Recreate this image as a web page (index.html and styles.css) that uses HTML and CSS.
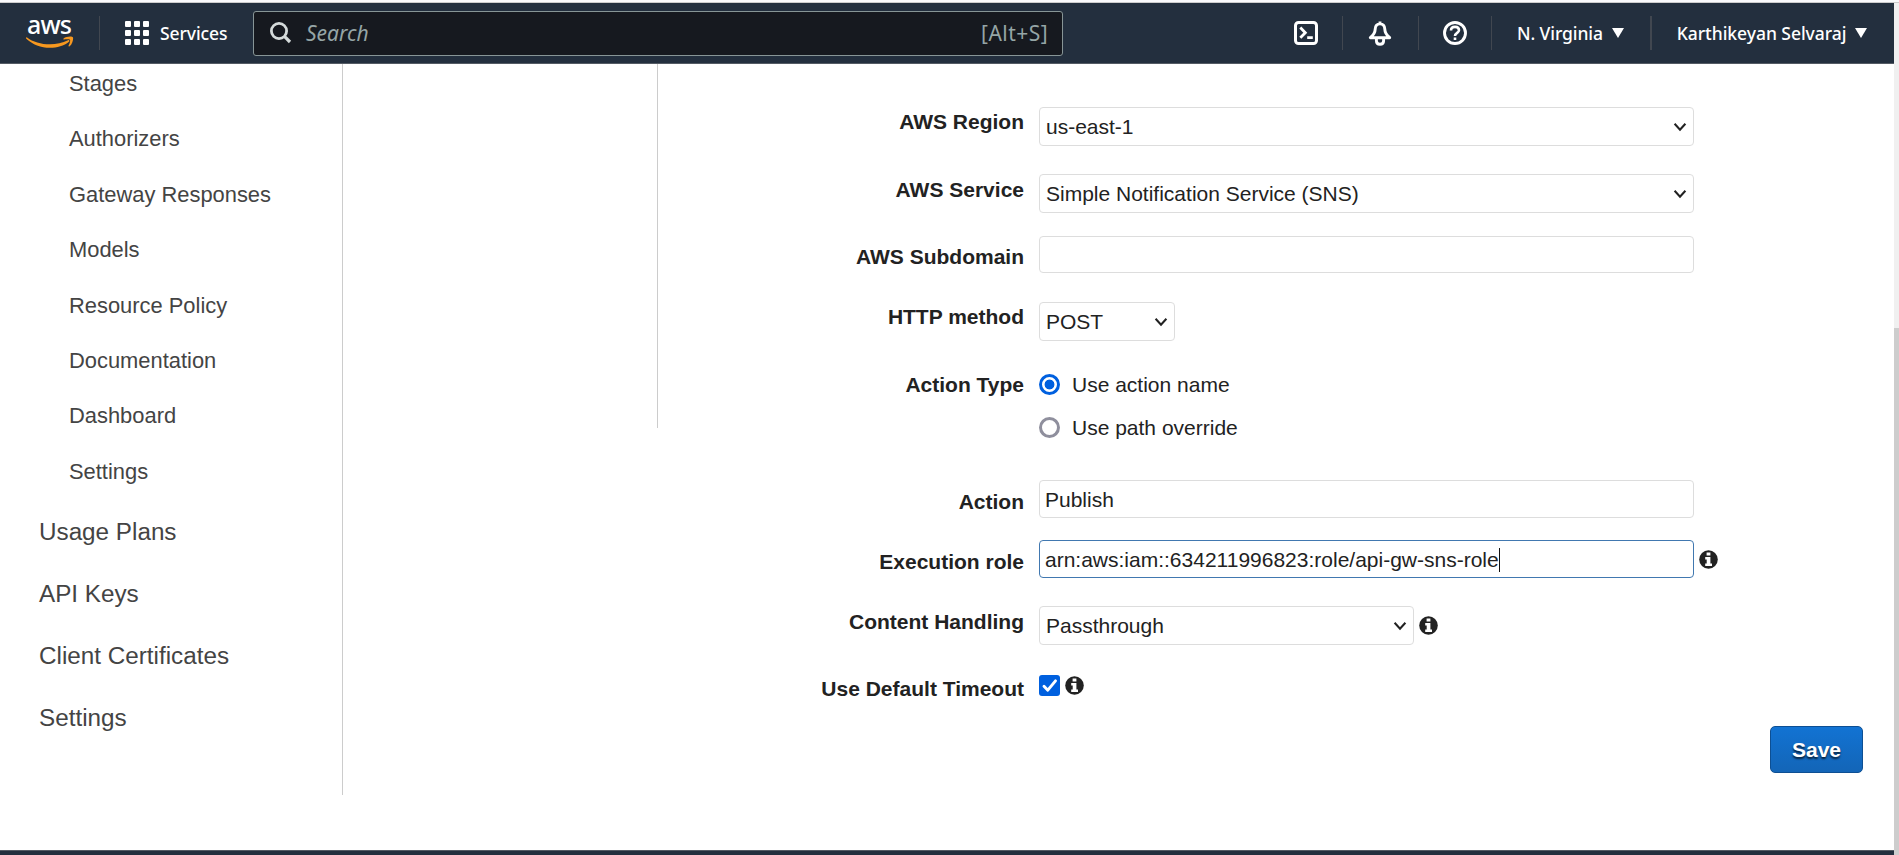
FILE: index.html
```html
<!DOCTYPE html>
<html lang="en">
<head>
<meta charset="utf-8">
<title>API Gateway</title>
<link rel="stylesheet" href="styles.css">
</head>
<body>
<svg class="defs" width="0" height="0" aria-hidden="true">
  <symbol id="chev" viewBox="0 0 14 10"><path d="M1.6 1.8 7 7.600l5.400-5.800" fill="none" stroke="#222" stroke-width="2.100"/></symbol>
  <symbol id="info" viewBox="0 0 19 19"><circle cx="9.500" cy="9.500" r="9.300" fill="#222"/><path d="M7.600 2.400h3.800v3H7.600zM6.200 7.100h5.200v6.400h1.600v2.400H6.200v-2.400h1.500V9.400H6.200z" fill="#fff"/></symbol>
</svg>
<div class="edge"></div>
<div class="shell">
  <div class="page">
    <header class="nav">
      <div class="logo">
        <span class="logo-text">aws</span>
        <svg class="smile" width="48" height="12" viewBox="0 0 48 12"><path d="M.7 1.200C7 6 15 8.300 24 8.300c6.300 0 12.500-1.500 18-4.100 1.200-.5 2 .8 1 1.600C38 10 31 11.800 24 11.800 15 11.800 6.500 8.500.3 2.700-.2 2.100.1 1 .7 1.200z" fill="#f7981f"/><path d="M37.600 2.400c2.200-1.900 8.400-2.600 9.300-1.200.7 1.200-.3 6.700-3.300 9.100-.7.500-1.400.1-1-.7.700-1.700 2.100-4.900 1.300-5.800-.7-.8-4.300-.5-5.900-.3-.7 0-.9-.6-.4-1.100z" fill="#f7981f"/></svg>
      </div>
      <span class="sep sep-logo"></span>
      <div class="services">
        <svg width="24" height="24" viewBox="0 0 24 24" fill="#fff"><rect width="6" height="6" rx="1"/><rect x="9" width="6" height="6" rx="1"/><rect x="18" width="6" height="6" rx="1"/><rect y="9" width="6" height="6" rx="1"/><rect x="9" y="9" width="6" height="6" rx="1"/><rect x="18" y="9" width="6" height="6" rx="1"/><rect y="18" width="6" height="6" rx="1"/><rect x="9" y="18" width="6" height="6" rx="1"/><rect x="18" y="18" width="6" height="6" rx="1"/></svg>
        <span class="t-services">Services</span>
      </div>
      <div class="search">
        <svg width="22" height="22" viewBox="0 0 22 22" fill="none" stroke="#d5dbdb"><circle cx="9" cy="9" r="7.600" stroke-width="2.800"/><path d="M14.200 14.200 20 20" stroke-width="3.200"/></svg>
        <span class="placeholder">Search</span>
        <span class="shortcut">[Alt+S]</span>
      </div>
      <div class="tools">
        <svg class="ico shell-ico" width="24" height="24" viewBox="0 0 24 24" fill="none" stroke="#fff" stroke-width="3"><rect x="1.500" y="1.500" width="21" height="21" rx="3"/><path d="m6.300 6.600 5 5.100-5 5.100M13.200 16.600h5.600" stroke-width="2.800"/></svg>
        <span class="sep"></span>
        <svg class="ico bell-ico" width="24" height="25" viewBox="0 0 24 25" fill="none" stroke="#fff" stroke-width="2.900" stroke-linejoin="round"><path d="M12 .4v2M12 2.900c-3 0-4.700 2.100-4.800 5.200-.1 4-1.500 5.800-4.900 8.600h19.400c-3.400-2.800-4.800-4.600-4.900-8.600-.1-3.100-1.800-5.200-4.800-5.200zM8.400 17.200v2.500c0 2.100 1.500 3.500 3.600 3.500s3.600-1.400 3.600-3.500v-2.500"/></svg>
        <span class="sep"></span>
        <svg class="ico" width="24" height="24" viewBox="0 0 24 24" fill="none" stroke="#fff" stroke-width="2.900"><circle cx="12" cy="12" r="10.500"/><path d="M8 9.600C8 7.200 9.600 5.900 12 5.900s4 1.400 4 3.400c0 2.600-4 2.700-4 5.800M12 16.500V19" stroke-width="2.600"/></svg>
        <span class="sep"></span>
        <span class="menu t-region">N. Virginia</span><svg class="tri" width="12" height="10" viewBox="0 0 12 10"><path d="M0 0h12L6 10z" fill="#fff"/></svg>
        <span class="sep sep-user"></span>
        <span class="menu t-user">Karthikeyan Selvaraj</span><svg class="tri" width="12" height="10" viewBox="0 0 12 10"><path d="M0 0h12L6 10z" fill="#fff"/></svg>
      </div>
    </header>
    <main class="body">
      <nav class="side">
        <ul class="sub">
          <li>Stages</li><li>Authorizers</li><li>Gateway Responses</li><li>Models</li><li>Resource Policy</li><li>Documentation</li><li>Dashboard</li><li>Settings</li>
        </ul>
        <ul class="top">
          <li>Usage Plans</li><li>API Keys</li><li>Client Certificates</li><li>Settings</li>
        </ul>
      </nav>
      <div class="tree"></div>
      <section class="form">
        <div class="row r-region"><label>AWS Region</label><div class="field select wide"><span>us-east-1</span><svg width="14" height="10"><use href="#chev"/></svg></div></div>
        <div class="row r-service"><label>AWS Service</label><div class="field select wide"><span>Simple Notification Service (SNS)</span><svg width="14" height="10"><use href="#chev"/></svg></div></div>
        <div class="row r-sub"><label>AWS Subdomain</label><div class="field wide"></div></div>
        <div class="row r-method"><label>HTTP method</label><div class="field select method"><span>POST</span><svg width="14" height="10"><use href="#chev"/></svg></div></div>
        <div class="row r-type"><label>Action Type</label>
          <div class="radios">
            <div class="option"><span class="radio on"></span><span>Use action name</span></div>
            <div class="option"><span class="radio"></span><span>Use path override</span></div>
          </div>
        </div>
        <div class="row r-action"><label>Action</label><div class="field wide tall"><span>Publish</span></div></div>
        <div class="row r-role"><label>Execution role</label><div class="field wide tall focus"><span>arn:aws:iam::634211996823:role/api-gw-sns-role</span><i class="caret"></i></div><svg class="info" width="19" height="19"><use href="#info"/></svg></div>
        <div class="row r-content"><label>Content Handling</label><div class="field select content"><span>Passthrough</span><svg width="14" height="10"><use href="#chev"/></svg></div><svg class="info" width="19" height="19"><use href="#info"/></svg></div>
        <div class="row r-timeout"><label>Use Default Timeout</label><svg class="check" width="21" height="21" viewBox="0 0 21 21"><rect width="21" height="21" rx="3" fill="#0060df"/><path d="m5 11.300 3.800 3.900 7.700-9.400" fill="none" stroke="#fff" stroke-width="2.900" stroke-linecap="round" stroke-linejoin="round"/></svg><svg class="info" width="19" height="19"><use href="#info"/></svg></div>
        <button class="save">Save</button>
      </section>
    </main>
    <footer class="foot"></footer>
  </div>
  <div class="scroll"><div class="thumb"></div></div>
</div>
</body>
</html>
```
FILE: styles.css
```css
* { box-sizing: border-box; }
body { margin: 0; width: 1899px; height: 855px; overflow: hidden; background: #fff; font-family: "Liberation Sans", Arial, sans-serif; color: #222; }
svg { display: block; flex: none; }
.defs { position: absolute; }
.edge { height: 3px; background: #f9f9fb; border-bottom: 1px solid #ccc; }
.shell { display: flex; height: 852px; }
.page { width: 1894px; display: flex; flex-direction: column; }

.scroll { width: 5px; background: #f0f0f0; padding-top: 325px; }
.thumb { height: 527px; background: #cdcdcd; }

.nav { height: 61px; flex: none; background: #232f3e; border-bottom: 1px solid #545b64; display: flex; align-items: center; font-family: "Noto Sans", "Open Sans", sans-serif; color: #fff; white-space: nowrap; }
.logo { width: 48px; height: 33px; margin: 0 0 4px 26px; display: flex; flex-direction: column; }
.logo-text { height: 19px; line-height: 19px; padding-left: 1px; font-size: 25px; font-weight: 500; letter-spacing: -.9px; }
.smile { margin-top: 2px; }
.sep { width: 1px; height: 34px; background: #414750; flex: none; }
.sep-logo { margin-left: 25px; }
.services { display: flex; align-items: center; margin-left: 25px; width: 128px; gap: 11px; }
.t-services { font-size: 17.5px; font-weight: 500; letter-spacing: -.1px; margin-top: -1px; }
.search { width: 810px; height: 45px; border: 1px solid #879596; border-radius: 3px; background: #16191f; display: flex; align-items: center; padding: 0 14px 0 16px; color: #95a5a6; font-size: 21px; }
.placeholder { font-style: italic; margin: -1px 0 0 14px; letter-spacing: 0; }
.shortcut { margin: -1px 0 0 auto; letter-spacing: .45px; }
.tools { display: flex; align-items: center; margin-left: 231px; }
.ico + .sep { margin: 0 25px 0 24px; }
.bell-ico + .sep { margin: 0 24px 0 26px; }
.t-region { margin: -1px 9px 0 0; }
.tri + .sep-user { width: 2px; margin: 0 25px 0 26px; }
.menu { font-size: 17.5px; font-weight: 500; letter-spacing: -.1px; }
.t-user { margin: -1px 9px 0 0; letter-spacing: -.05px; }

.body { flex: 1; display: flex; align-items: flex-start; }
.side { width: 343px; height: 731px; border-right: 1px solid #ccc; color: #444; }
.side ul { list-style: none; margin: 0; padding: 0; }
.sub li { padding-left: 69px; font-size: 21.9px; height: 55.4px; line-height: 40px; }
.side .top { padding-top: 2px; }
.top li { padding-left: 39px; font-size: 24.25px; height: 62px; line-height: 46px; }
.tree { width: 315px; height: 364px; border-right: 1px solid #ccc; }
.form { flex: 1; display: flex; flex-direction: column; padding-right: 31px; font-size: 21px; }
.row { display: flex; align-items: flex-start; }
.row label { width: 366px; margin-right: 15px; text-align: right; font-weight: bold; line-height: 24px; flex: none; }
.field { border: 1px solid #ddd; border-radius: 4px; height: 37px; padding: 0 5px; display: flex; align-items: center; white-space: nowrap; }
.select { height: 39px; padding: 0 6px; justify-content: space-between; }
.wide { width: 655px; }
.method { width: 136px; }
.content { width: 375px; }
.tall { height: 38px; padding-top: 1px; }
.focus { border-color: #4178b0; }
.caret { width: 1px; height: 24px; background: #111; }
.info { margin-left: 5px; }
.r-region { margin-top: 43px; height: 67px; }
.r-region label { padding-top: 3px; }
.r-service { height: 62px; }
.r-service label { padding-top: 4px; }
.r-sub { height: 66px; }
.r-sub label { padding-top: 9px; }
.r-method { height: 70px; }
.r-method label { padding-top: 3px; }
.r-type { height: 108px; padding-top: 1px; }
.option { height: 43px; line-height: 24px; display: flex; align-items: flex-start; }
.radio { width: 21px; height: 21px; border: 3px solid #8f8f9d; border-radius: 50%; margin: 1px 12px 0 0; }
.radio.on { border-color: #0060df; background: radial-gradient(circle, #0060df 4.500px, #fff 5.300px); }
.r-action { height: 60px; }
.r-action label { padding-top: 10px; }
.r-role { height: 66px; }
.r-role label { padding-top: 10px; }
.r-role .info { margin-top: 10px; }
.r-content { height: 69px; }
.r-content label { padding-top: 4px; }
.r-content .info { margin-top: 10px; }
.r-timeout { height: 51px; }
.r-timeout label { padding-top: 2px; }
.r-timeout .info { margin-top: 1px; }
.save { align-self: flex-end; width: 93px; height: 47px; border: 1px solid #0d4f93; border-radius: 5px; background: linear-gradient(#1273d3, #1365b7); color: #fff; font: bold 21px "Liberation Sans", Arial, sans-serif; text-shadow: 0 2px 2px rgba(0,0,0,.7); padding: 0; }
.foot { height: 5px; background: #232f3e; border-top: 1px solid #545b64; }
```
